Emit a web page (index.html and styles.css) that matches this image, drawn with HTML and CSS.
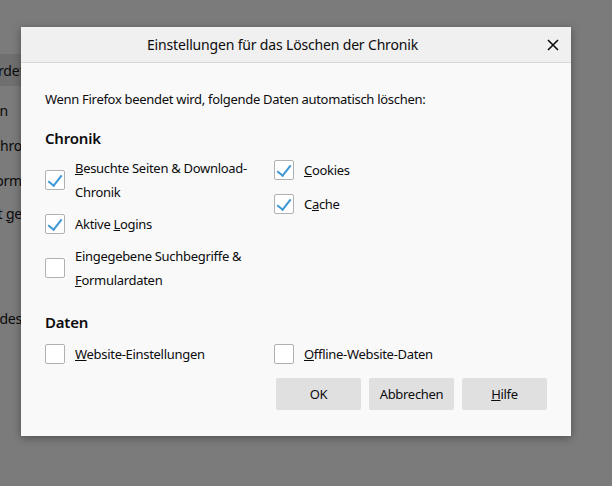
FILE: index.html
```html
<!DOCTYPE html>
<html lang="de">
<head>
    <meta charset="UTF-8">
    <title>Einstellungen für das Löschen der Chronik</title>
    <link rel="stylesheet" href="styles.css">
</head>
<body>

    <!-- abgedunkelte Einstellungsseite im Hintergrund -->
    <div class="backdrop">
        <div class="bg-row bg-select"><span>nach benutzerdef</span></div>
        <div class="bg-row r-private"><span>Modus verwenden</span></div>
        <div class="bg-row r-history"><span>Download-Chro</span></div>
        <div class="bg-row r-forms"><span>Form</span></div>
        <div class="bg-row r-clear"><span>Firefox jetzt <u>g</u>e</span></div>
        <div class="bg-row r-data"><span>Website-Daten des</span></div>
    </div>

    <!-- Dialog -->
    <div class="dialog">
        <div class="dialog-header">
            <span class="dialog-title">Einstellungen für das Löschen der Chronik</span>
            <button class="close" type="button" aria-label="Schließen">
                <svg width="12" height="12" viewBox="0 0 12 12"><path d="M1 1 L11 11 M11 1 L1 11" stroke="#0c0c0d" stroke-width="1.6" fill="none"/></svg>
            </button>
        </div>

        <div class="dialog-body">
            <p class="intro">Wenn Firefox beendet wird, folgende Daten automatisch löschen:</p>

            <h2 class="section-title">Chronik</h2>
            <div class="options">
                <div class="col">
                    <label class="check">
                        <span class="box on"></span>
                        <span class="text"><u>B</u>esuchte Seiten &amp; Download-<br>Chronik</span>
                    </label>
                    <label class="check">
                        <span class="box on"></span>
                        <span class="text">Aktive <u>L</u>ogins</span>
                    </label>
                    <label class="check">
                        <span class="box"></span>
                        <span class="text">Eingegebene Suchbegriffe &amp;<br><u>F</u>ormulardaten</span>
                    </label>
                </div>
                <div class="col col-right">
                    <label class="check">
                        <span class="box on"></span>
                        <span class="text"><u>C</u>ookies</span>
                    </label>
                    <label class="check">
                        <span class="box on"></span>
                        <span class="text">C<u>a</u>che</span>
                    </label>
                </div>
            </div>

            <h2 class="section-title data-title">Daten</h2>
            <div class="options data-options">
                <div class="col">
                    <label class="check">
                        <span class="box"></span>
                        <span class="text"><u>W</u>ebsite-Einstellungen</span>
                    </label>
                </div>
                <div class="col">
                    <label class="check">
                        <span class="box"></span>
                        <span class="text"><u>O</u>ffline-Website-Daten</span>
                    </label>
                </div>
            </div>

            <div class="buttons">
                <button type="button" class="btn">OK</button>
                <button type="button" class="btn">Abbrechen</button>
                <button type="button" class="btn"><u>H</u>ilfe</button>
            </div>
        </div>
    </div>

</body>
</html>
```

FILE: styles.css
```css
* {
    margin: 0;
    padding: 0;
    box-sizing: border-box;
}

body {
    width: 612px;
    height: 486px;
    overflow: hidden;
    background: #7b7b7c;
    font-family: "Noto Sans", "Open Sans", sans-serif;
    color: #0c0c0d;
    position: relative;
}

/* Hintergrundseite: nur der linke Rand ist zu sehen */
.backdrop {
    display: flex;
    flex-direction: column;
    padding-top: 54px;
    font-size: 14px;
    letter-spacing: -0.2px;
    color: #0a0a0a;
}

.bg-row {
    width: 22px;
    height: 24px;
    display: flex;
    justify-content: flex-end;
    align-items: center;
    white-space: nowrap;
    overflow: hidden;
}

.bg-select {
    width: 24px;
    height: 32px;
    background: #6f6f70;
}

.r-private { margin-top: 12px; padding-right: 14px; }
.r-history { margin-top: 11px; }
.r-forms   { margin-top: 11px; }
.r-clear   { margin-top: 9px; }
.r-data    { margin-top: 81px; }

/* Dialogfenster */
.dialog {
    position: absolute;
    left: 21px;
    top: 27px;
    width: 550px;
    height: 409px;
    background: #f9f9fa;
    box-shadow: 0 2px 8px rgba(0, 0, 0, 0.35);
    display: flex;
    flex-direction: column;
}

.dialog-header {
    height: 36px;
    padding-right: 27px;
    background: #f0f0f0;
    border-bottom: 1px solid #d7d7db;
    display: flex;
    align-items: center;
    justify-content: center;
    position: relative;
}

.dialog-title {
    font-size: 14px;
    letter-spacing: -0.17px;
}

.close {
    position: absolute;
    right: 11px;
    top: 11px;
    width: 14px;
    height: 14px;
    border: none;
    background: none;
    display: flex;
    align-items: center;
    justify-content: center;
}

.dialog-body {
    padding: 27px 24px 24px 24px;
    display: flex;
    flex-direction: column;
    font-size: 13px;
    letter-spacing: -0.3px;
}

.intro {
    line-height: 18px;
}

.section-title {
    margin-top: 20px;
    font-size: 15px;
    font-weight: 600;
    line-height: 20px;
    letter-spacing: -0.2px;
}

.data-title {
    margin-top: 20px;
}

.options {
    margin-top: 8px;
    display: grid;
    grid-template-columns: 229px 1fr;
}

.data-options {
    margin-top: 10px;
}

.col {
    display: flex;
    flex-direction: column;
    gap: 8px;
}

.col-right {
    padding-top: 2px;
    gap: 10px;
}

.check {
    display: flex;
    align-items: center;
    gap: 10px;
    line-height: 24px;
}

.box {
    flex: 0 0 auto;
    width: 20px;
    height: 20px;
    border: 1px solid #b1b1b3;
    border-radius: 2px;
    background: #fff;
    position: relative;
}

/* Haken */
.box.on::after {
    content: "";
    position: absolute;
    left: 5px;
    top: 1px;
    width: 6px;
    height: 12px;
    border-right: 2px solid #3d97d6;
    border-bottom: 2px solid #3d97d6;
    transform: rotate(38deg);
    transform-origin: 50% 50%;
}

.buttons {
    margin-top: 12px;
    display: flex;
    justify-content: flex-end;
    gap: 8px;
}

.btn {
    width: 85px;
    height: 32px;
    border: none;
    border-radius: 2px;
    background: #e0e0e1;
    font-family: inherit;
    font-size: 13px;
    letter-spacing: -0.3px;
    color: #0c0c0d;
}
```
